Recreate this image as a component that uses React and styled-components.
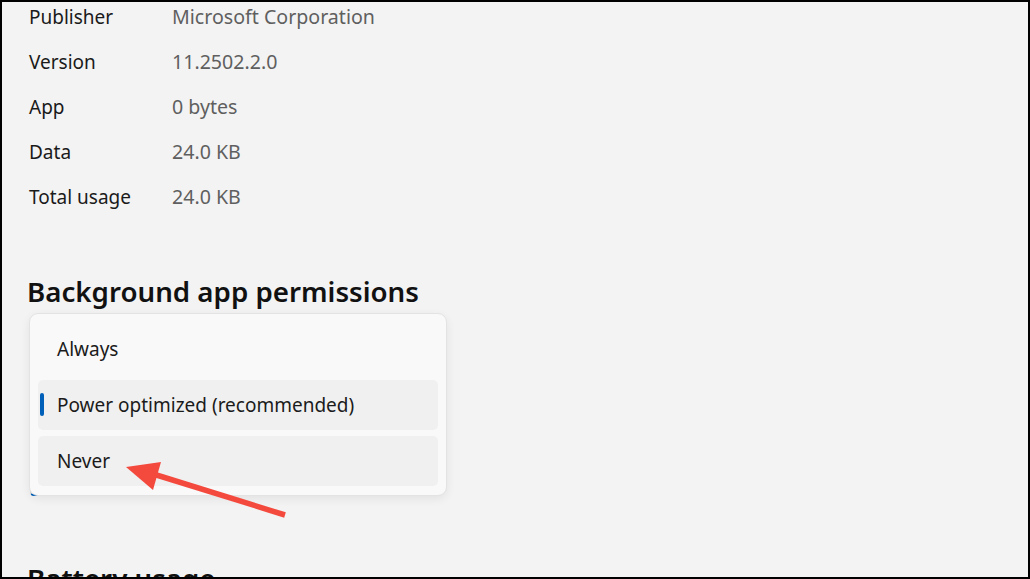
import React from "react";
import styled, { createGlobalStyle } from "styled-components";

const GlobalStyle = createGlobalStyle`
  html, body {
    margin: 0;
    padding: 0;
    background: #000;
  }
  * {
    box-sizing: border-box;
  }
`;

const info = [
  { label: "Publisher", value: "Microsoft Corporation" },
  { label: "Version", value: "11.2502.2.0" },
  { label: "App", value: "0 bytes" },
  { label: "Data", value: "24.0 KB" },
  { label: "Total usage", value: "24.0 KB" },
];

const options = [
  { text: "Always" },
  { text: "Power optimized (recommended)", selected: true },
  { text: "Never", hovered: true },
];

const App = () => {
  return (
    <>
      <GlobalStyle />
      <Page>
        <InfoList>
          {info.map((row) => (
            <InfoRow key={row.label}>
              <Label>{row.label}</Label>
              <Value>{row.value}</Value>
            </InfoRow>
          ))}
        </InfoList>

        <SectionTitle>Background app permissions</SectionTitle>
        <ComboArea>
          <Combo />
          <Popup>
            {options.map((opt) => (
              <Option key={opt.text} $filled={opt.selected || opt.hovered}>
                {opt.selected && <Indicator />}
                {opt.text}
              </Option>
            ))}
          </Popup>
        </ComboArea>

        <NextTitle>Battery usage</NextTitle>

        {/* стрелка-аннотация поверх скриншота */}
        <Annotation viewBox="0 0 1030 579">
          <line
            x1="285"
            y1="515"
            x2="150"
            y2="473"
            stroke="#f44a3e"
            strokeWidth="5.5"
          />
          <polygon points="126,467 161,462 153,490" fill="#f44a3e" />
        </Annotation>
      </Page>
    </>
  );
};

export default App;

const Page = styled.div`
  position: relative;
  width: 1030px;
  height: 579px;
  overflow: hidden;
  border: 2px solid #000;
  background: #f3f3f3;
  padding-left: 25px;
  font-family: "Noto Sans", "Open Sans", sans-serif;
  color: #1a1a1a;
`;

const InfoList = styled.div`
  margin-top: -8px;
  padding-left: 2px;
`;

const InfoRow = styled.div`
  display: grid;
  grid-template-columns: 143px 1fr;
  align-items: center;
  height: 45px;
  font-size: 19px;
`;

const Label = styled.span`
  color: #1a1a1a;
`;

const Value = styled.span`
  color: #5f5f5f;
  font-size: 19.6px;
`;

const SectionTitle = styled.h2`
  margin: 54px 0 0;
  font-size: 27.7px;
  line-height: 36px;
  font-weight: 600;
  color: #111;
`;

const ComboArea = styled.div`
  position: relative;
  height: 190px;
  padding: 71px 0 0 3px;
`;

const Combo = styled.div`
  width: 224px;
  height: 116px;
  border: 1px solid #d6d6d6;
  border-bottom: 2px solid #005fb8;
  border-radius: 4px;
  background: #fbfbfb;
`;

const Popup = styled.div`
  position: absolute;
  top: 4px;
  left: 2px;
  width: 418px;
  height: 183px;
  display: flex;
  flex-direction: column;
  gap: 6px;
  padding: 10px 8px 9px;
  border: 1px solid #e3e3e3;
  border-radius: 9px;
  background: #f9f9f9;
  box-shadow: 0 3px 10px rgba(0, 0, 0, 0.07);
`;

const Option = styled.div`
  position: relative;
  display: flex;
  align-items: center;
  height: 50px;
  padding-left: 19px;
  border-radius: 5px;
  background: ${(p) => (p.$filled ? "#f0f0f0" : "transparent")};
  font-size: 19px;
  color: #1b1b1b;
`;

const Indicator = styled.span`
  position: absolute;
  left: 2px;
  top: 13px;
  width: 4px;
  height: 23px;
  border-radius: 2px;
  background: #005fb8;
`;

const NextTitle = styled.h2`
  margin: 61px 0 0;
  font-size: 27.7px;
  line-height: 36px;
  font-weight: 600;
  color: #111;
`;

const Annotation = styled.svg`
  position: absolute;
  top: -2px;
  left: -2px;
  width: 1030px;
  height: 579px;
  pointer-events: none;
`;
